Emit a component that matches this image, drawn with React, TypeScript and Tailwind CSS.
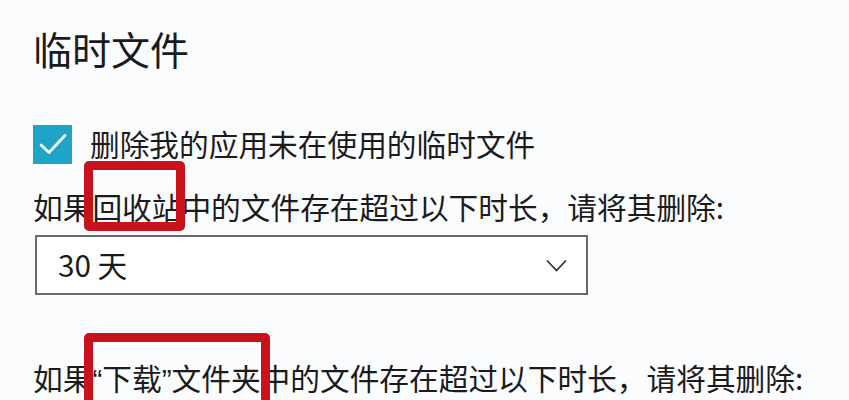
import React from "react";

const font = { fontFamily: '"Noto Sans CJK SC", "Noto Sans", sans-serif' };

const RedBox = ({ className }: { className: string }) => (
  <span
    className={
      "pointer-events-none absolute rounded-[5px] border-[9px] border-[#c8131c] " +
      className
    }
  />
);

export default function App() {
  return (
    <div
      className="h-[400px] w-[849px] overflow-hidden bg-[#fbfcfe] pl-[33px] pt-[24px] text-[#1b1b1b]"
      style={font}
    >
      <h1 className="text-[39px] leading-[48px] font-normal">临时文件</h1>

      <div className="mt-[52px] flex h-[40px] items-center">
        <span className="flex h-[39px] w-[39px] items-center justify-center bg-[#1fa4c8]">
          <svg width="30" height="24" viewBox="0 0 30 24" fill="none">
            <path
              d="M3 13 L11 20.5 L27 3.5"
              stroke="white"
              strokeWidth="2.6"
              strokeLinecap="round"
              strokeLinejoin="round"
            />
          </svg>
        </span>
        <span className="ml-[18px] text-[29.7px] leading-[40px]">
          删除我的应用未在使用的临时文件
        </span>
      </div>

      <p className="mt-[23px] text-[29.7px] leading-[40px] whitespace-nowrap">
        如果
        <span className="relative">
          回收站
          <RedBox className="-left-[8px] -right-[4px] -top-[24px] -bottom-[3px]" />
        </span>
        中的文件存在超过以下时长，请将其删除:
      </p>

      <div className="ml-[2px] mt-[8px] flex h-[60px] w-[553px] items-center justify-between border-2 border-[#6a6a6a] bg-white pl-[21px] pr-[19px]">
        <span className="text-[29.7px] leading-[40px]">30 天</span>
        <svg width="21" height="13" viewBox="0 0 21 13" fill="none">
          <path d="M1 1.5 L10.5 11.5 L20 1.5" stroke="#333" strokeWidth="1.8" />
        </svg>
      </div>

      <p className="mt-[63px] text-[29.7px] leading-[40px] whitespace-nowrap">
        如果
        <span className="relative">
          <span style={{ fontFamily: '"Liberation Sans", sans-serif' }}>“</span>
          下载
          <span style={{ fontFamily: '"Liberation Sans", sans-serif' }}>”</span>
          文件夹
          <RedBox className="-left-[8px] -right-[9px] -top-[23px] -bottom-[12px]" />
        </span>
        中的文件存在超过以下时长，请将其删除:
      </p>
    </div>
  );
}
